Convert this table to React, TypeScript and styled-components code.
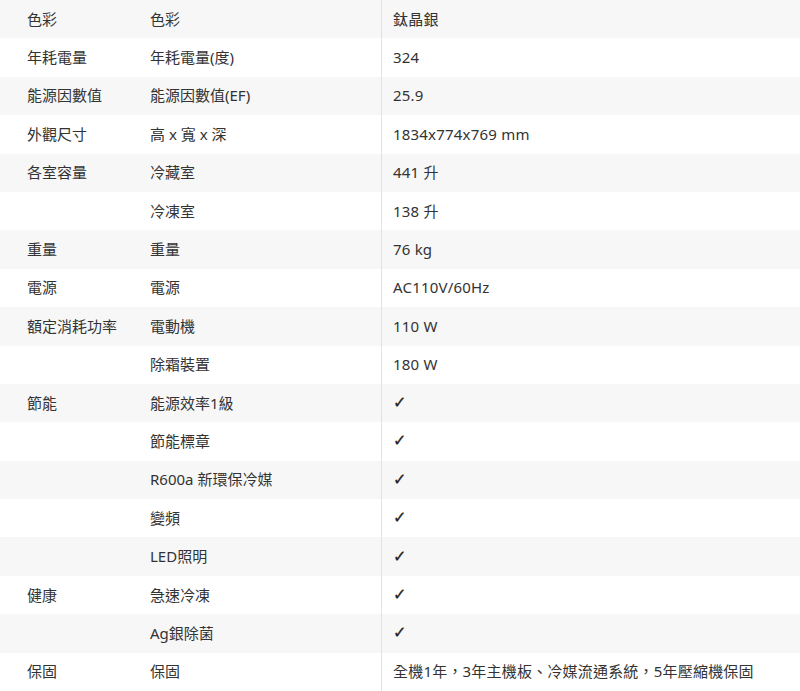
import React from "react";
import styled, { createGlobalStyle } from "styled-components";

const Global = createGlobalStyle`
  html, body { margin: 0; padding: 0; background: #ffffff; }
  body { font-family: "Noto Sans", "Noto Sans CJK TC", sans-serif; }
`;

const Table = styled.div`
  width: 800px;
  height: 691px;
  display: flex;
  flex-direction: column;
  overflow: hidden;
`;

const Row = styled.div<{ $shade: boolean }>`
  flex: 1 1 0;
  display: grid;
  grid-template-columns: 150px 231px 1fr;
  background: ${(p) => (p.$shade ? "#f7f7f7" : "#ffffff")};
  color: #333333;
  font-size: 15px;
  line-height: 1;
`;

const Cell = styled.div<{ $value?: boolean; $first?: boolean }>`
  display: flex;
  align-items: center;
  padding-left: ${(p) => (p.$first ? "27px" : p.$value ? "11px" : "0")};
  border-left: ${(p) => (p.$value ? "1px solid #e2e2e2" : "none")};
  white-space: nowrap;
  letter-spacing: ${(p) => (p.$value ? "0.2px" : "0")};
`;

const Check = styled.span`
  font-family: "DejaVu Sans", sans-serif;
  font-size: 16px;
  font-weight: bold;
  color: #222222;
  -webkit-text-stroke: 0.3px #222222;
`;

type R = [string, string, string];
const rows: R[] = [
  ["色彩", "色彩", "鈦晶銀"],
  ["年耗電量", "年耗電量(度)", "324"],
  ["能源因數值", "能源因數值(EF)", "25.9"],
  ["外觀尺寸", "高 x 寬 x 深", "1834x774x769 mm"],
  ["各室容量", "冷藏室", "441 升"],
  ["", "冷凍室", "138 升"],
  ["重量", "重量", "76 kg"],
  ["電源", "電源", "AC110V/60Hz"],
  ["額定消耗功率", "電動機", "110 W"],
  ["", "除霜裝置", "180 W"],
  ["節能", "能源效率1級", "✓"],
  ["", "節能標章", "✓"],
  ["", "R600a 新環保冷媒", "✓"],
  ["", "變頻", "✓"],
  ["", "LED照明", "✓"],
  ["健康", "急速冷凍", "✓"],
  ["", "Ag銀除菌", "✓"],
  ["保固", "保固", "全機1年，3年主機板、冷媒流通系統，5年壓縮機保固"],
];

export default function App() {
  return (
    <>
      <Global />
      <Table>
        {rows.map((r, i) => (
          <Row key={i} $shade={i % 2 === 0}>
            <Cell $first>{r[0]}</Cell>
            <Cell>{r[1]}</Cell>
            <Cell $value>{r[2] === "✓" ? <Check>✓</Check> : r[2]}</Cell>
          </Row>
        ))}
      </Table>
    </>
  );
}
